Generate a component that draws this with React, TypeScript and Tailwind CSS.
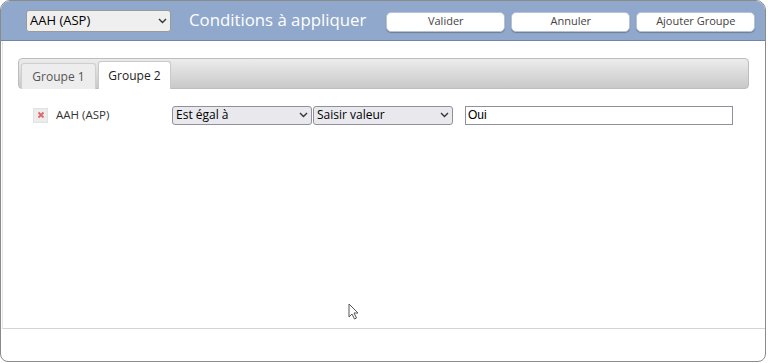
import React from "react";

const Chevron = () => (
  <svg width="9" height="6" viewBox="0 0 9 6" className="text-[#333]">
    <path d="M1 1l3.5 3.5L8 1" fill="none" stroke="currentColor" strokeWidth="1.4" />
  </svg>
);

const FakeSelect = ({ label, className, textCls = "text-[12px]" }: { label: string; className: string; textCls?: string }) => (
  <div
    className={`flex items-center justify-between border rounded-[3px] px-[3px] ${className}`}
  >
    <span className={`${textCls} text-black leading-none`}>{label}</span>
    <Chevron />
  </div>
);

const App = () => {
  return (
    <div className="w-[768px] h-[363px] bg-white font-['Open_Sans',sans-serif] relative">
      <div className="w-[766px] h-[362px] border border-[#8a8a8a] rounded-t-[10px] rounded-b-[8px] flex flex-col overflow-hidden">
        {/* header */}
        <div className="h-[40px] bg-[#8fa8cb] border-b border-[#6f86a8] flex items-center pl-[25px] shrink-0">
          <FakeSelect
            label="AAH (ASP)"
            textCls="text-[13px]"
            className="w-[145px] h-[22px] bg-[#efefef] border-[#9a9a9a]"
          />
          <div className="ml-[18px] text-white text-[16.8px] leading-none">Conditions à appliquer</div>
          <div className="ml-[20px] flex gap-[6px] mt-[2px]">
            {["Valider", "Annuler", "Ajouter Groupe"].map((b) => (
              <div
                key={b}
                className="w-[119px] h-[20px] bg-white rounded-[5px] border border-[#b9c2cf] shadow-[0_1px_1px_rgba(0,0,0,0.25)] flex items-center justify-center text-[11px] text-[#444]"
              >
                {b}
              </div>
            ))}
          </div>
        </div>
        {/* body */}
        <div className="h-[288px] border-b border-[#d4d4d4] ml-[1px] border-l border-l-[#e6e6e6] pt-[17px] pl-[15px] shrink-0">
          <div className="w-[731px] h-[31px] rounded-[4px] border border-[#bdbdbd] bg-gradient-to-b from-[#ececec] to-[#c9c9c9] flex items-end pl-[2px] gap-[2px]">
            <div className="w-[75px] h-[26px] bg-[#ededed] border border-[#cfcfcf] border-b-0 rounded-t-[3px] flex items-center justify-center text-[12px] text-[#555] -mb-[1px]">
              Groupe 1
            </div>
            <div className="w-[73px] h-[28px] bg-white border border-[#c9c9c9] border-b-0 rounded-t-[3px] flex items-center justify-center text-[12px] text-[#222] -mb-[1px]">
              Groupe 2
            </div>
          </div>
          <div className="flex items-center mt-[16px] h-[20px]">
            <div className="ml-[15px] w-[15px] h-[15px] bg-[#ececec] border border-[#e2e2e2] flex items-center justify-center">
              <svg width="8" height="8" viewBox="0 0 8 8">
                <path d="M1.5 1.5l5 5M6.5 1.5l-5 5" stroke="#e06666" strokeWidth="1.8" />
              </svg>
            </div>
            <span className="ml-[8px] text-[11.5px] text-[#333] w-[116px]">AAH (ASP)</span>
            <FakeSelect label="Est égal à" className="w-[140px] h-[19px] bg-[#e9e9ed] border-[#8f8f9d]" />
            <FakeSelect label="Saisir valeur" className="w-[140px] h-[19px] ml-[1px] bg-[#e9e9ed] border-[#8f8f9d]" />
            <div className="ml-[12px] w-[268px] h-[19px] border border-[#8f8f9d] flex items-center px-[2px] text-[12px] text-black font-['Liberation_Sans',sans-serif]">
              Oui
            </div>
          </div>
        </div>
      </div>
      {/* mouse cursor */}
      <svg className="absolute left-[348px] top-[303px]" width="12" height="18" viewBox="0 0 12 18">
        <path d="M1 1v13l3-3 2.5 5 2-1-2.5-5H10z" fill="white" stroke="#555" strokeWidth="1" />
      </svg>
    </div>
  );
};

export default App;
